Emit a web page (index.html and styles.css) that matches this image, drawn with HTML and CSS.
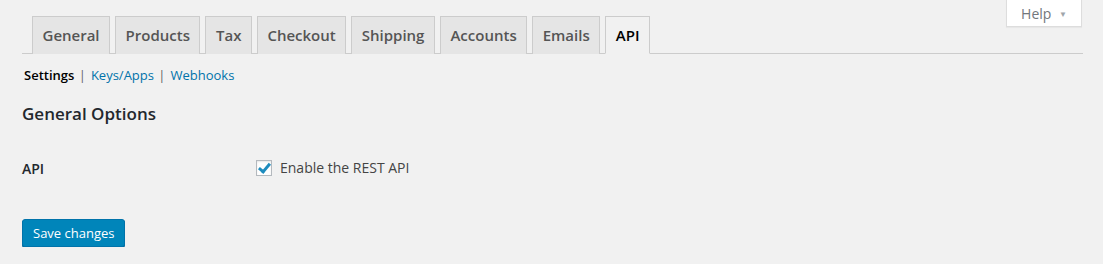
FILE: index.html
```html
<!DOCTYPE html>
<html lang="en">

<head>
    <meta charset="UTF-8">
    <meta name="viewport" content="width=device-width, initial-scale=1.0">
    <title>WooCommerce Settings - API</title>
    <link rel="stylesheet" href="styles.css">
</head>

<body>
    <div class="help__wrap">
        <button class="help__botao">Help <span class="help__seta">&#9660;</span></button>
    </div>

    <div class="wrap">
        <nav class="nav-tab-wrapper">
            <a class="nav-tab" href="#">General</a>
            <a class="nav-tab" href="#">Products</a>
            <a class="nav-tab" href="#">Tax</a>
            <a class="nav-tab" href="#">Checkout</a>
            <a class="nav-tab" href="#">Shipping</a>
            <a class="nav-tab" href="#">Accounts</a>
            <a class="nav-tab" href="#">Emails</a>
            <a class="nav-tab nav-tab-active" href="#">API</a>
        </nav>

        <ul class="subsubsub">
            <li><a class="current" href="#">Settings</a> <span class="sep">|</span></li>
            <li><a href="#">Keys/Apps</a> <span class="sep">|</span></li>
            <li><a href="#">Webhooks</a></li>
        </ul>

        <h2 class="titulo">General Options</h2>

        <div class="form-row">
            <div class="form-row__label">API</div>
            <label class="form-row__campo">
                <input type="checkbox" class="checkbox" checked>
                <span>Enable the REST API</span>
            </label>
        </div>

        <button class="button-primary">Save changes</button>
    </div>
</body>

</html>
```

FILE: styles.css
```css
body {
    margin: 0;
    background-color: #f1f1f1;
    font-family: "Open Sans", sans-serif;
    font-size: 13px;
    color: #444;
}

.help__wrap {
    display: flex;
    justify-content: flex-end;
    padding-right: 21px;
    height: 0;
}

.help__botao {
    width: 76px;
    height: 28px;
    margin: -1px 0 0 0;
    padding: 2px 0 0 0;
    background: #fff;
    border: 1px solid #ddd;
    border-top: none;
    font-family: "Open Sans", sans-serif;
    font-size: 14px;
    color: #72777c;
    box-shadow: 0 1px 1px rgba(0, 0, 0, .04);
}

.help__seta {
    font-size: 8px;
    color: #a0a5aa;
    margin-left: 4px;
    vertical-align: 2px;
}

.wrap {
    margin: 0 20px 0 22px;
    padding-top: 16px;
}

.nav-tab-wrapper {
    display: flex;
    border-bottom: 1px solid #ccc;
    padding-left: 10px;
}

.nav-tab {
    margin-right: 5px;
    margin-bottom: -1px;
    padding: 6px 9.5px;
    border: 1px solid #ccc;
    border-bottom: none;
    background: #e5e5e5;
    color: #555;
    font-size: 15px;
    line-height: 24px;
    font-weight: 600;
    text-decoration: none;
}

.nav-tab-active {
    background: #f1f1f1;
    color: #000;
    border-bottom: 1px solid #f1f1f1;
    padding-bottom: 6px;
}

.subsubsub {
    list-style: none;
    display: flex;
    margin: 8px 0 0 2px;
    padding: 0;
    font-size: 13px;
    line-height: 26px;
}

.subsubsub li {
    margin-right: 5px;
}

.subsubsub a {
    color: #0073aa;
    text-decoration: none;
}

.subsubsub a.current {
    color: #000;
    font-weight: 600;
}

.sep {
    color: #666;
    margin-left: 1px;
}

.titulo {
    margin: 14px 0 0 0;
    font-size: 17px;
    line-height: 24px;
    font-weight: 600;
    color: #23282d;
}

.form-row {
    display: flex;
    align-items: center;
    margin-top: 31px;
}

.form-row__label {
    width: 234px;
    font-size: 14px;
    font-weight: 600;
    color: #23282d;
    padding-top: 2px;
}

.form-row__campo {
    display: flex;
    align-items: center;
    font-size: 14px;
    color: #444;
}

.checkbox {
    appearance: none;
    width: 16px;
    height: 16px;
    margin: 0 8px 0 0;
    border: 1px solid #b4b9be;
    background: #fff;
    box-shadow: inset 0 1px 2px rgba(0, 0, 0, .1);
    position: relative;
}

.checkbox:checked::before {
    content: "";
    position: absolute;
    left: 4px;
    top: 0px;
    width: 4px;
    height: 9px;
    border: solid #1e8cbe;
    border-width: 0 3px 3px 0;
    transform: rotate(40deg);
}

.button-primary {
    margin-top: 41px;
    height: 28px;
    padding: 0 10px 1px;
    background: #0085ba;
    border: 1px solid #0073aa;
    border-radius: 3px;
    box-shadow: 0 1px 0 #006799;
    color: #fff;
    font-family: "Open Sans", sans-serif;
    font-size: 13px;
    line-height: 26px;
}
```
